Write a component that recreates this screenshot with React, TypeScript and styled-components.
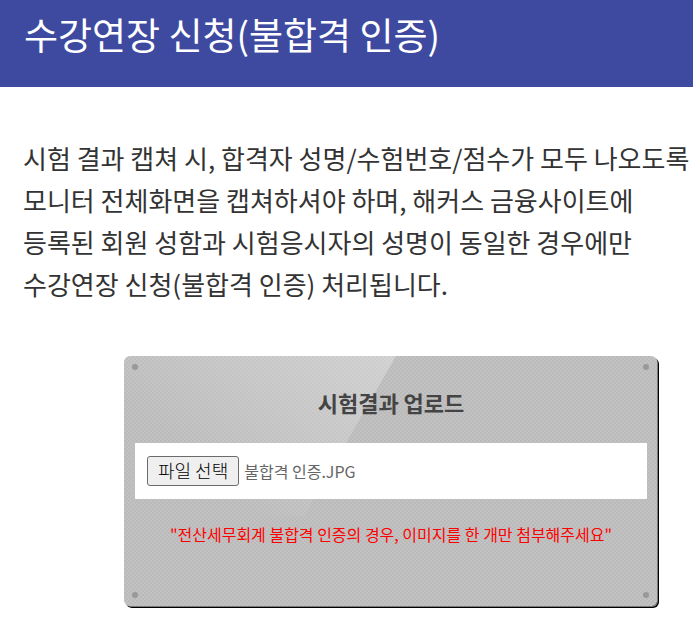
import React, { useState } from 'react';
import styled, { createGlobalStyle } from 'styled-components';

const GlobalStyle = createGlobalStyle`
  * { box-sizing: border-box; }
  body { margin: 0; background: #fff; color: #333; font-family: "Noto Sans CJK KR", sans-serif; }
`;
const Header = styled.header`
  background: #3e4a9f;
  padding: 8px 24px 27px;
`;
const Title = styled.h1`
  margin: 0;
  color: #fff;
  font-size: 37px;
  line-height: 52px;
  font-weight: 400;
`;
const Content = styled.main`
  padding: 50px 0 18px 23px;
`;
const Notice = styled.p`
  margin: 0;
  font-size: 26px;
  line-height: 42px;
  white-space: nowrap;
`;
const Panel = styled.section`
  position: relative;
  margin: 51px 36px 0 101px;
  padding: 30px 10px 60px 11px;
  border-radius: 6px;
  box-shadow: 1px 1px 0 #777, 2px 2px 0 #000;
  background: repeating-conic-gradient(#c2c2c2 0 25%, #bababa 0 50%) 0 0 / 4px 4px;
`;
const Shine = styled.svg`
  position: absolute;
  top: 0;
  left: 0;
  width: 272px;
  height: 160px;
`;
const Rivet = styled.span<{ $v: 'top' | 'bottom'; $h: 'left' | 'right' }>`
  position: absolute;
  ${p => p.$v}: 8px;
  ${p => p.$h}: 8px;
  width: 6px;
  height: 6px;
  border-radius: 50%;
  background: #999;
`;
const PanelTitle = styled.h2`
  position: relative;
  margin: 0;
  text-align: center;
  font-size: 22px;
  line-height: 32px;
  font-weight: 700;
  color: #444;
`;
const Field = styled.div`
  position: relative;
  margin-top: 25px;
  padding: 13px 12px;
  background: #fff;
  display: flex;
  align-items: center;
  gap: 5px;
  font-size: 16px;
  line-height: 24px;
  color: #666;
`;
const FileInput = styled.input`
  position: absolute;
  width: 1px;
  height: 1px;
  opacity: 0;
`;
const PickLabel = styled.label`
  padding: 1px 10px 3px;
  border: 1px solid #6b6b6b;
  border-radius: 3px;
  background: #efefef;
  color: #000;
  font-size: 18px;
  font-weight: 300;
  line-height: 24px;
  cursor: pointer;
  ${FileInput}:focus-visible + & { outline: 2px solid #3e4a9f; }
`;
const Warning = styled.p`
  position: relative;
  margin: 23px 0 0;
  text-align: center;
  color: #f00;
  font-size: 16px;
  line-height: 24px;
`;

export default function App() {
  const [fileName, setFileName] = useState('불합격 인증.JPG');
  return (
    <>
      <GlobalStyle />
      <Header><Title>수강연장 신청(불합격 인증)</Title></Header>
      <Content>
        <Notice>
          시험 결과 캡쳐 시, 합격자 성명/수험번호/점수가 모두 나오도록<br />
          모니터 전체화면을 캡쳐하셔야 하며, 해커스 금융사이트에<br />
          등록된 회원 성함과 시험응시자의 성명이 동일한 경우에만<br />
          수강연장 신청(불합격 인증) 처리됩니다.
        </Notice>
        <Panel>
          <Shine viewBox="0 0 272 160" aria-hidden="true">
            <defs>
              <linearGradient id="shine" gradientUnits="userSpaceOnUse" x1="270" y1="0" x2="130" y2="160">
                <stop offset="0" stopColor="#fff" stopOpacity="0.3" />
                <stop offset="0.5" stopColor="#fff" stopOpacity="0.16" />
                <stop offset="1" stopColor="#fff" stopOpacity="0" />
              </linearGradient>
            </defs>
            <path d="M6 0H272L180 160H0V6A6 6 0 0 1 6 0Z" fill="url(#shine)" />
          </Shine>
          <Rivet $v="top" $h="left" />
          <Rivet $v="top" $h="right" />
          <Rivet $v="bottom" $h="left" />
          <Rivet $v="bottom" $h="right" />
          <PanelTitle>시험결과 업로드</PanelTitle>
          <Field>
            <FileInput
              id="result-file"
              type="file"
              accept="image/*"
              onChange={e => setFileName(e.target.files?.[0]?.name ?? fileName)}
            />
            <PickLabel htmlFor="result-file">파일 선택</PickLabel>
            <span>{fileName}</span>
          </Field>
          <Warning>"전산세무회계 불합격 인증의 경우, 이미지를 한 개만 첨부해주세요"</Warning>
        </Panel>
      </Content>
    </>
  );
}
